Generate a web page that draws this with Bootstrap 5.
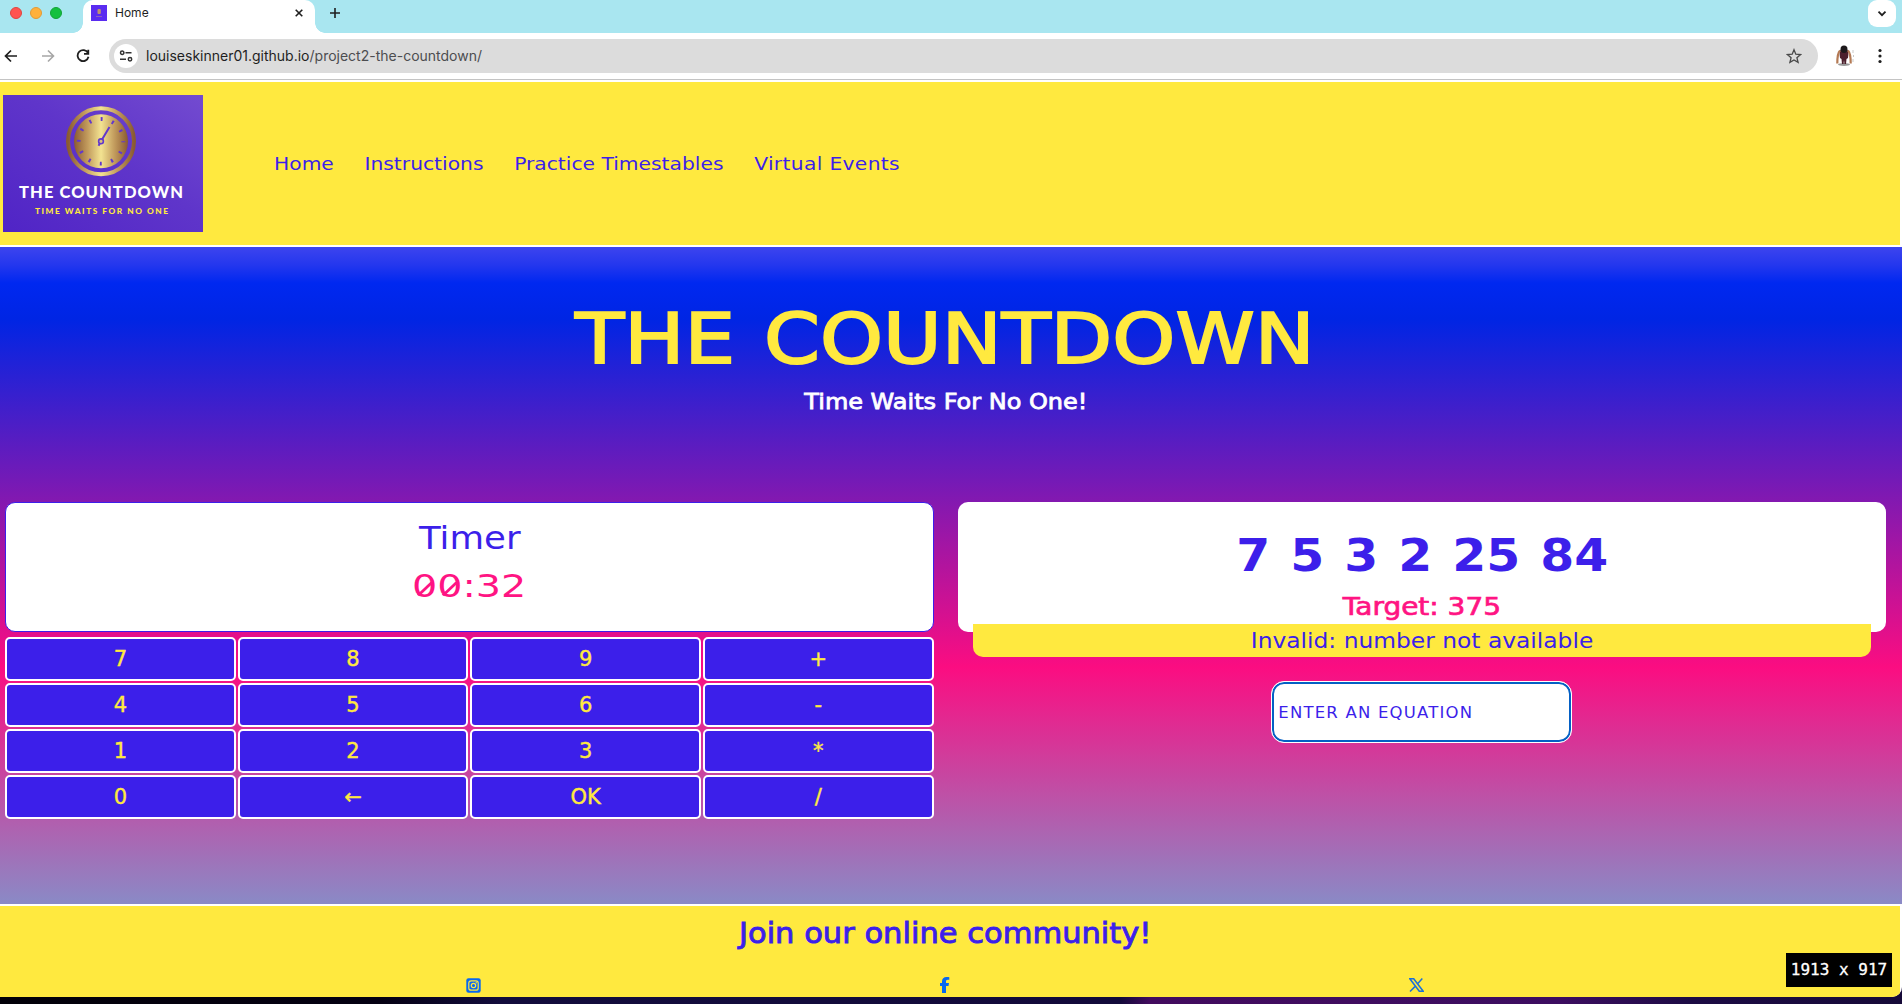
<!DOCTYPE html>
<html lang="en">
<head>
<meta charset="utf-8">
<meta name="viewport" content="width=device-width, initial-scale=1">
<title>Home</title>
<link href="https://cdn.jsdelivr.net/npm/bootstrap@5.3.0/dist/css/bootstrap.min.css" rel="stylesheet">
<style>
:root{--sun:#ffe93f;--ink:#3c1fea;--pink:#ff1483}
body{height:1004px;overflow:hidden;font-family:"DejaVu Sans",sans-serif;color:var(--ink);
  background:linear-gradient(90deg,#020008 0,#040012 380px,#120c3c 500px,#120a3a 1120px,#420b5e 1150px,#3c0d60 1560px,#1c0b44 1690px,#160a38 100%)}
svg{display:block;flex:none}
.window{height:997px;border-radius:0 0 10px 0;overflow:hidden}
/* browser chrome */
.chrome{font-family:Inter,sans-serif;color:#1f1f1f}
.tabstrip{height:33px;background:#a9e6f0;padding-left:10px}
.light{width:12px;height:12px;border-radius:50%;margin-right:8px;margin-top:-7px;border:1px solid #e0443e;background:#ff5450}
.light.amber{background:#ffb13c;border-color:#e29a35}
.light.green{background:#13c03f;border-color:#12a336}
.tab-shape{width:232px;height:33px;margin-left:13px;border-radius:10px 10px 0 0;position:relative;padding:0 12px 7px 8px;font-size:12px}
.tab-shape::before,.tab-shape::after{content:"";position:absolute;bottom:0;width:10px;height:10px}
.tab-shape::before{left:-10px;background:radial-gradient(circle at 0 0,transparent 9.5px,#fff 10px)}
.tab-shape::after{right:-10px;background:radial-gradient(circle at 100% 0,transparent 9.5px,#fff 10px)}
.favicon{width:16px;height:16px;background:#5a2cf0;margin-right:8px}
.plus{margin:-7px 0 0 15px}
.chev{width:28px;height:27px;border-radius:9px;margin-right:6px}
.toolbar-row{height:46px;padding-left:4px}
.omni{height:34px;width:1709px;border-radius:17px;background:#dcdcdc;padding:0 16px 0 5px;margin-left:19px;font-size:14px}
.site{width:24px;height:24px;margin-right:8px}
.url{margin-top:-2px}
.omni .path{color:#4c4d50}
.rule{height:1px;background:#c4c4c4;margin-bottom:2px}
/* page */
.wide{display:inline-block;transform:scaleX(var(--w,1.1))}
.masthead{height:163px;background:var(--sun);margin-right:2px;padding-left:3px}
.main-nav{margin-left:71px;gap:28px;font-size:18.5px;white-space:nowrap;line-height:28px;transform:scaleX(1.095);transform-origin:0 50%}
.main-nav .nav-link{color:var(--ink);padding:0}
.main-nav .nav-link:last-child{letter-spacing:.3px}
.hero{height:657px;margin-top:2px;padding-top:50px;
 background:linear-gradient(180deg,#3d44ee 0,#2437ee 18px,#0028f0 36px,#0025e4 72px,#fb0d81 420px,#8a8ac6 657px)}
.title{width:1890px;font-size:70px;line-height:84px;color:var(--sun);word-spacing:3px;-webkit-text-stroke:2px var(--sun);margin:0;font-weight:400}
.sub{width:1891px;font-size:22px;line-height:32px;margin:5px 0 84px;-webkit-text-stroke:.8px #fff}
.board{padding:0 16px 0 5px;gap:24px}
.half{flex:1 1 0;min-width:0}
.panel{height:130px;background:#fff;border-radius:10px}
.timer{border:1px solid var(--ink);padding-top:15px;font-size:32px;line-height:40px}
.clock{color:var(--pink);margin-top:8px}
.zero{position:relative;display:inline-block}
.zero svg{position:absolute;left:2px;top:8px}
.keys{display:grid;grid-template-columns:repeat(4,1fr);gap:2px;margin-top:5px}
.key{height:44px;border:2px solid #fff;border-radius:5px;background:var(--ink);color:var(--sun);font-size:21px;line-height:1;padding:0;-webkit-text-stroke:.4px}
.key:hover{background:var(--ink);color:var(--sun);border-color:#fff}
.numbers{font-size:44px;line-height:52px;font-weight:700;padding-top:28px;gap:18px;transform:scaleX(1.11)}
.target{font-size:24px;line-height:30px;margin-top:10px;color:var(--pink);-webkit-text-stroke:.7px}
.strip{position:relative;height:33px;margin:-8px 15px 0;background:var(--sun);border-radius:0 0 10px 10px;font-size:21px;line-height:34px}
.answer{width:301px;height:62px;margin:24px auto 0;border:1px solid #fff;border-radius:13px;box-shadow:inset 0 0 0 2px #0460c4;padding:0 6px;font-size:16.5px;letter-spacing:1.2px;background:#fff;display:block;outline:0;font-family:inherit}
.answer::placeholder{color:var(--ink);opacity:1}
.foot{height:91px;margin:2px 2px 0 0;background:var(--sun);padding-top:10px}
.foot h2{width:1890px;font-size:28px;line-height:36px;font-weight:400;-webkit-text-stroke:.9px;margin:0 0 25px}
.social{width:1890px;height:16px;padding:0 466px}
.size-tip{position:absolute;left:1786px;top:953px;width:106px;height:34px;background:#000;color:#fff;font:16px/34px "DejaVu Sans Mono",monospace;-webkit-text-stroke:.3px}
</style>
</head>
<body>
<div class="window bg-white">
 <div class="chrome">
  <div class="tabstrip d-flex align-items-center">
   <span class="light"></span><span class="light amber"></span><span class="light green"></span>
   <div class="tab-shape bg-white d-flex align-items-center">
    <svg class="favicon" viewBox="0 0 16 16"><rect x="6.500" y="4" width="3.300" height="5" rx="1" fill="#c09370"/><rect x="5" y="11" width="6" height="1" fill="#8d5fc0"/></svg>
    <span>Home</span>
    <svg class="ms-auto" width="8" height="8" viewBox="0 0 8 8"><path d="M.7.7l6.600 6.600M7.300.7L.7 7.300" stroke="#1f1f1f" stroke-width="1.600"/></svg>
   </div>
   <svg class="plus" width="10" height="10" viewBox="0 0 10 10"><path d="M5 0v10M0 5h10" stroke="#1f1f1f" stroke-width="1.600"/></svg>
   <div class="chev bg-white ms-auto align-self-start d-flex align-items-center justify-content-center"><svg width="10" height="8" viewBox="0 0 10 8"><path d="M1.500 1.700L5 5.200l3.500-3.500" fill="none" stroke="#1f1f1f" stroke-width="1.800"/></svg></div>
  </div>
  <div class="toolbar-row d-flex align-items-center">
   <svg width="14" height="14" viewBox="0 0 14 14" fill="none" stroke="#1f1f1f" stroke-width="1.700"><path d="M13 7H2M7 1.500L1.500 7 7 12.500"/></svg>
   <svg class="ms-4" width="14" height="14" viewBox="0 0 14 14" fill="none" stroke="#a6a6a6" stroke-width="1.600"><path d="M0 7h11M6 1.500L11.500 7 6 12.500"/></svg>
   <svg width="14" height="14" viewBox="0 0 14 14" fill="none" stroke="#1f1f1f" stroke-width="1.800" style="margin-left:20px"><path d="M12 4A5.500 5.500 0 1 0 12.500 7.800M12.300.8v4.100H8"/></svg>
   <div class="omni d-flex align-items-center">
    <span class="site bg-white rounded-circle d-flex align-items-center justify-content-center"><svg width="14" height="12" viewBox="0 0 14 12" fill="none" stroke="#333" stroke-width="1.500"><circle cx="3.200" cy="2.700" r="1.700"/><path d="M6.500 2.700h6M1 9.300h6"/><circle cx="11" cy="9.300" r="1.700"/></svg></span>
    <span class="url">louiseskinner01.github.io<span class="path">/project2-the-countdown/</span></span>
    <svg class="ms-auto" width="16" height="16" viewBox="0 0 16 16"><path d="M8 1.700l1.800 4.500 4.800.4-3.700 3.100 1.200 4.700L8 11.900l-4.100 2.500 1.200-4.700L1.400 6.600l4.800-.4z" fill="none" stroke="#4a4a4a" stroke-width="1.300"/></svg>
   </div>
   <svg width="20" height="22" viewBox="0 0 20 22" style="margin-left:17px"><ellipse cx="9" cy="19.500" rx="6" ry="1.500" fill="#999"/><path d="M5.500 5Q4 7 5 13l1.500 1 .5 5h1.500l.5-4 .5 4H11l.5-5 1.500-1q1-6-.5-8z" fill="#4c1f2c"/><path d="M5 5.500Q2.300 8 2.300 18.500M13 5.500q2.700 2.500 2.700 13" stroke="#b47a54" stroke-width="2.200" fill="none"/><ellipse cx="9" cy="4.200" rx="3.500" ry="3.700" fill="#1d191b"/><path d="M18 5v3M18.500 10v2M18 14v3" stroke="#bbb" stroke-width=".8"/></svg>
   <svg width="4" height="16" viewBox="0 0 4 16" style="margin-left:23px"><g fill="#1f1f1f"><circle cx="2" cy="2.500" r="1.600"/><circle cx="2" cy="8" r="1.600"/><circle cx="2" cy="13.500" r="1.600"/></g></svg>
  </div>
  <div class="rule"></div>
 </div>

 <header class="masthead d-flex align-items-center">
  <svg width="200" height="137" viewBox="0 0 200 137">
   <defs>
    <linearGradient id="bg" x1="0" y1="1" x2="1" y2="0"><stop offset="0" stop-color="#5024c6"/><stop offset=".55" stop-color="#5f35ca"/><stop offset="1" stop-color="#734bd0"/></linearGradient>
    <linearGradient id="gold"><stop offset="0" stop-color="#8a5a32"/><stop offset=".25" stop-color="#c29b5d"/><stop offset=".5" stop-color="#f3e391"/><stop offset=".75" stop-color="#c29b5d"/><stop offset="1" stop-color="#8a5a32"/></linearGradient>
   </defs>
   <rect width="200" height="137" fill="url(#bg)"/>
   <circle cx="98" cy="46.300" r="33" fill="none" stroke="url(#gold)" stroke-width="4"/>
   <circle cx="98" cy="46.300" r="27" fill="url(#gold)"/>
   <circle cx="98" cy="46.300" r="22.300" fill="none" stroke="#6238cc" stroke-width="3.800" stroke-dasharray="2 9.676" stroke-dashoffset="1"/>
   <path d="M98 46.300L106.500 32M98 46.300l-2.500 4.500" stroke="#6238cc" stroke-width="2"/><circle cx="98" cy="46.300" r="2.400" fill="#d9c27b" stroke="#6238cc" stroke-width="1.600"/>
   <text x="16" y="103.300" textLength="164" lengthAdjust="spacing" font-family="Lato, sans-serif" font-weight="900" font-size="16.500" fill="#fff">THE COUNTDOWN</text>
   <text x="32" y="118.600" textLength="133" lengthAdjust="spacing" font-family="Lato, sans-serif" font-weight="900" font-size="8.300" fill="#ffe93f">TIME WAITS FOR NO ONE</text>
  </svg>
  <nav class="main-nav nav flex-nowrap">
   <a class="nav-link" href="#">Home</a>
   <a class="nav-link" href="#">Instructions</a>
   <a class="nav-link" href="#">Practice Timestables</a>
   <a class="nav-link" href="#">Virtual Events</a>
  </nav>
 </header>

 <main class="hero">
  <h1 class="title text-center"><span class="wide" style="--w:1.145">THE COUNTDOWN</span></h1>
  <p class="sub text-center text-white"><span class="wide" style="--w:1.090">Time Waits For No One!</span></p>
  <div class="board d-flex">
   <section class="half">
    <div class="panel timer text-center">
     <div><span class="wide" style="--w:1.110">Timer</span></div>
     <div class="clock"><span class="wide" style="--w:1.240"><span class="zero">0<svg width="17" height="26"><path d="M3 21.500L14 8.500" stroke="#ff1483" stroke-width="2.600"/></svg></span><span class="zero">0<svg width="17" height="26"><path d="M3 21.500L14 8.500" stroke="#ff1483" stroke-width="2.600"/></svg></span>:32</span></div>
    </div>
    <div class="keys">
     <button class="btn key">7</button><button class="btn key">8</button><button class="btn key">9</button><button class="btn key">+</button>
     <button class="btn key">4</button><button class="btn key">5</button><button class="btn key">6</button><button class="btn key">-</button>
     <button class="btn key">1</button><button class="btn key">2</button><button class="btn key">3</button><button class="btn key">*</button>
     <button class="btn key">0</button><button class="btn key">←</button><button class="btn key">OK</button><button class="btn key">/</button>
    </div>
   </section>
   <section class="half text-center">
    <div class="panel">
     <div class="numbers d-flex justify-content-center"><span>7</span><span>5</span><span>3</span><span>2</span><span>25</span><span>84</span></div>
     <div class="target"><span class="wide" style="--w:1.165">Target: 375</span></div>
    </div>
    <div class="strip"><span class="wide" style="--w:1.112">Invalid: number not available</span></div>
    <input class="answer" placeholder="ENTER AN EQUATION" aria-label="Equation">
   </section>
  </div>
 </main>

 <footer class="foot">
  <h2 class="text-center"><span class="wide" style="--w:1.090">Join our online community!</span></h2>
  <div class="social d-flex justify-content-between align-items-center">
   <svg width="15" height="15" viewBox="0 0 15 15"><rect x=".3" y=".3" width="14.400" height="14.400" rx="2.200" fill="#0868f0"/><g fill="none" stroke="#ffe93f" stroke-width="1.200"><rect x="2.800" y="2.800" width="9.400" height="9.400" rx="2.300"/><circle cx="7.500" cy="7.500" r="2.200"/></g><circle cx="10.200" cy="4.800" r=".7" fill="#ffe93f"/></svg>
   <svg width="10" height="16" viewBox="0 0 10 16"><path d="M2 16V9H0V6h2V4.500C2 1.500 3.700 0 6.500 0 7.800 0 9.300.2 9.300.2v2.600H7.800C6.400 2.800 6 3.600 6 4.500V6h3l-.5 3H6v7z" fill="#0868f0"/></svg>
   <svg width="15" height="14" viewBox="0 0 15 14"><path d="M.8.700h3.900l9.500 12.600h-3.900zM13.300.5L8.400 6M6.400 8.100L1 13.500" fill="none" stroke="#1c70d8" stroke-width="1.500"/></svg>
  </div>
 </footer>
</div>
<div class="size-tip text-center">1913 x 917</div>
<script src="https://cdn.jsdelivr.net/npm/bootstrap@5.3.0/dist/js/bootstrap.bundle.min.js"></script>
</body>
</html>
